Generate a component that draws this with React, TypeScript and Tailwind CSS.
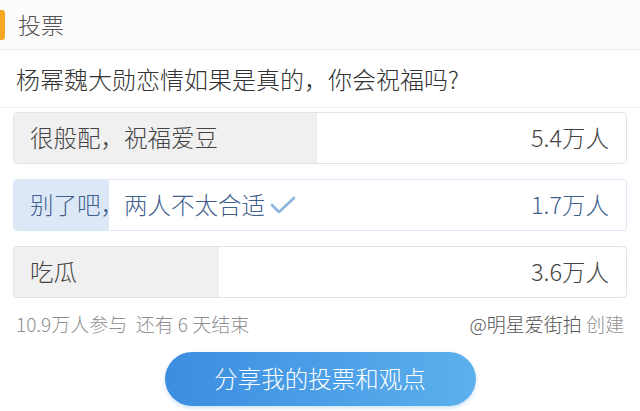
const font = { fontFamily: '"Noto Sans CJK SC", "Noto Sans", sans-serif' };

const options = [
  { label: '很般配，祝福爱豆', count: '5.4万人', pct: 49.5, voted: false },
  { label: '别了吧，两人不太合适', count: '1.7万人', pct: 15.6, voted: true },
  { label: '吃瓜', count: '3.6万人', pct: 33.5, voted: false },
];

export default function App() {
  return (
    <div className="w-[640px] h-[411px] bg-white overflow-hidden font-light" style={font}>
      {/* 标题 */}
      <div className="flex items-center h-[50px] border-b border-[#ececec] bg-[#fcfcfc]">
        <div className="w-[5px] h-[30px] bg-[#f5a623] rounded-r-[3px]"></div>
        <span className="ml-[13px] text-[23px] text-[#555] leading-none">投票</span>
      </div>

      {/* 问题 */}
      <div className="h-[58px] flex items-center px-4 border-b border-[#efefef]">
        <span className="text-[24px] text-[#333] leading-none">
          杨幂魏大勋恋情如果是真的，你会祝福吗?
        </span>
      </div>

      {/* 选项 */}
      <div className="px-[13px] pt-[4px] flex flex-col gap-[15px]">
        {options.map((o) => (
          <div
            key={o.label}
            className={`relative h-[52px] rounded-[4px] border overflow-hidden ${
              o.voted ? 'border-[#d9e6f3]' : 'border-[#e3e3e3]'
            }`}
          >
            <div
              className={`absolute inset-y-0 left-0 ${o.voted ? 'bg-[#dce8f6]' : 'bg-[#f0f0f0]'}`}
              style={{ width: `${o.pct}%` }}
            ></div>
            <div className="relative h-full flex items-center justify-between pl-[16px] pr-[17px]">
              <div className="flex items-center">
                <span className={`text-[23.5px] leading-none ${o.voted ? 'text-[#3f5f8f]' : 'text-[#444]'}`}>
                  {o.label}
                </span>
                {o.voted && (
                  <svg width="26" height="20" viewBox="0 0 26 20" className="ml-[5px]">
                    <path d="M2 10 L9 17 L24 3" fill="none" stroke="#8ab6e0" strokeWidth="2.6" strokeLinecap="round" strokeLinejoin="round" />
                  </svg>
                )}
              </div>
              <span className={`text-[23.5px] leading-none ${o.voted ? 'text-[#3f5f8f]' : 'text-[#444]'}`}>
                {o.count}
              </span>
            </div>
          </div>
        ))}
      </div>

      {/* 底部信息 */}
      <div className="flex justify-between items-center px-4 mt-[16px] text-[19px] leading-none">
        <span className="text-[#8f8f8f]">10.9万人参与&nbsp;&nbsp;还有 6 天结束</span>
        <span className="text-[#8f8f8f]">
          <span className="text-[#555]">@明星爱街拍</span> 创建
        </span>
      </div>

      {/* 分享按钮 */}
      <div className="flex justify-center mt-[19px]">
        <button className="w-[311px] h-[54px] rounded-full bg-gradient-to-r from-[#3b8de0] to-[#5cb0ec] text-white text-[23.5px] leading-none shadow-[0_2px_4px_rgba(60,140,220,0.25)]">
          分享我的投票和观点
        </button>
      </div>
    </div>
  );
}
